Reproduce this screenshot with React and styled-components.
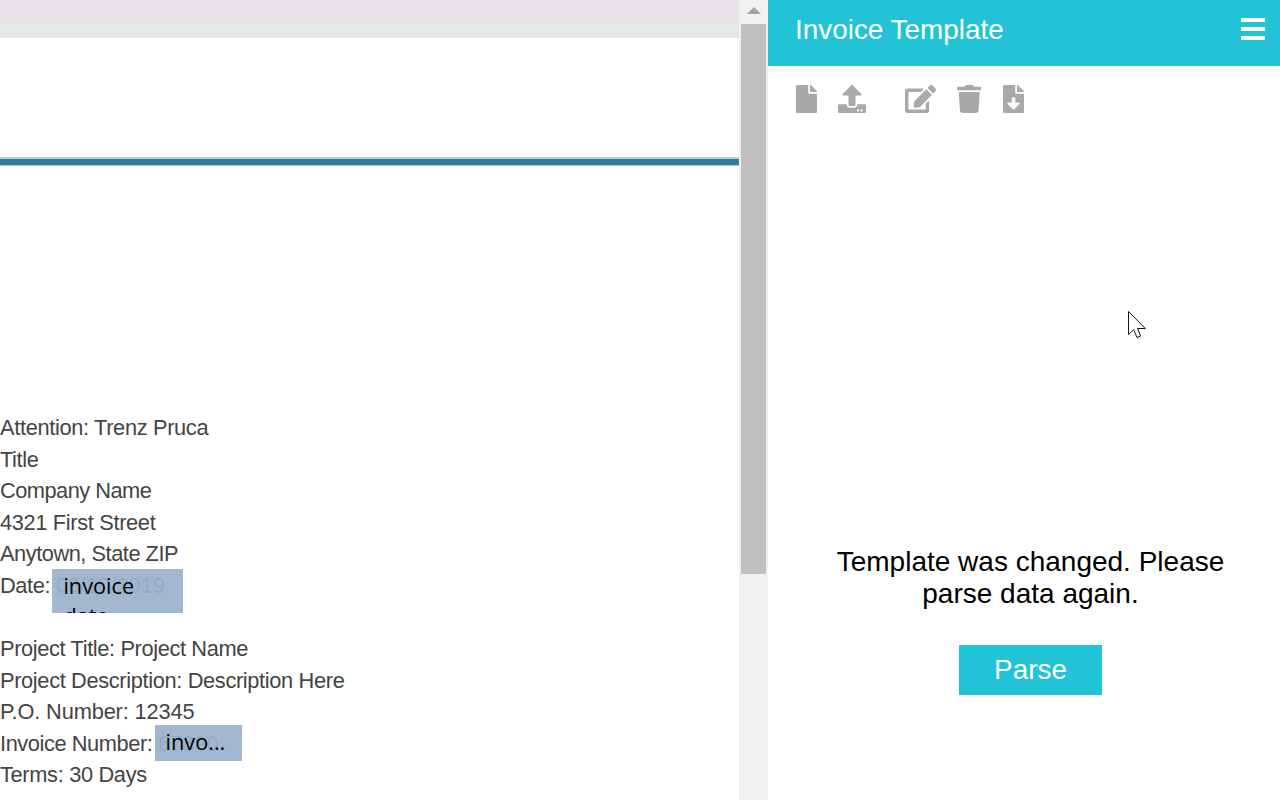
import React from "react";
import styled, { createGlobalStyle } from "styled-components";
import { FaFile, FaUpload, FaEdit, FaTrash, FaFileDownload } from "react-icons/fa";

const GlobalStyle = createGlobalStyle`
  * { box-sizing: border-box; }
  body { margin: 0; background: #fff; font-family: "Liberation Sans", Arial, sans-serif; overflow: hidden; }
`;

const Page = styled.div`
  position: relative;
  display: flex;
  width: 1280px;
  height: 800px;
  overflow: hidden;
`;

const Document = styled.main`
  width: 739px;
  height: 800px;
  overflow: hidden;
  background: #fff;
`;

const Band = styled.div`
  height: 38px;
  background: linear-gradient(#ebe2eb 0, #eae3ea 22px, #e8e8ec 27px, #e3e9e1 31px, #e3e8e1 38px);
`;

const Rule = styled.div`
  height: 9px;
  margin-top: 119px;
  background: #2f7f9f;
  border-top: 2px solid #b4d0d9;
  border-bottom: 1px solid #a5c5d5;
`;

const Details = styled.div`
  margin-top: 246.5px;
`;

const Line = styled.div`
  display: flex;
  align-items: center;
  height: 31.55px;
  color: #444;
  font-size: 21.8px;
  white-space: pre;
`;

const Text = styled.span`
  letter-spacing: ${(p) => p.$spacing}px;
`;

const Covered = styled.span`
  position: relative;
`;

const Field = styled.span`
  position: absolute;
  left: ${(p) => p.$left}px;
  top: ${(p) => p.$top}px;
  width: ${(p) => p.$width}px;
  height: ${(p) => p.$height}px;
  padding: ${(p) => p.$pad}px 10px 0 11px;
  overflow: hidden;
  background: rgba(155, 178, 203, 0.93);
  color: #000;
  font: 21.7px/30px "Open Sans", sans-serif;
  white-space: ${(p) => (p.$wrap ? "normal" : "nowrap")};
`;

const Scrollbar = styled.div`
  width: 29px;
  height: 800px;
  padding: 7px 2px 0;
  background: #f1f1f1;
`;

const Arrow = styled.div`
  width: 0;
  margin: 0 auto;
  border: 7px solid transparent;
  border-top: 0;
  border-bottom: 7px solid #a3a3a3;
`;

const Thumb = styled.div`
  width: 25px;
  height: 550px;
  margin-top: 10px;
  background: #c1c1c1;
`;

const Panel = styled.aside`
  display: flex;
  flex-direction: column;
  width: 512px;
  height: 800px;
`;

const Header = styled.header`
  display: flex;
  justify-content: space-between;
  height: 66px;
  padding: 13px 15px 0 27px;
  background: #22c3d6;
  color: #fff;
`;

const Title = styled.h1`
  margin: 1px 0 0;
  font-size: 27.9px;
  line-height: 32px;
  font-weight: 400;
`;

const Menu = styled.div`
  display: flex;
  flex-direction: column;
  gap: 5px;
  width: 24px;
  margin-top: 5px;
`;

const MenuBar = styled.i`
  height: 4px;
  background: #fff;
`;

const Toolbar = styled.nav`
  display: flex;
  height: 28px;
  margin: 19px 0 0 28px;
  color: #a9a9a9;
`;

const Tool = styled.span`
  display: block;
  width: ${(p) => p.$width}px;
  height: 28px;
  margin-right: ${(p) => p.$gap}px;
  svg { display: block; width: 100%; height: 28px; }
`;

const Notice = styled.section`
  display: flex;
  flex-direction: column;
  align-items: center;
  margin-top: 433px;
  padding-left: 13px;
`;

const Message = styled.p`
  width: 420px;
  margin: 0;
  color: #000;
  font-size: 28px;
  line-height: 32px;
  text-align: center;
`;

const Button = styled.button`
  width: 143px;
  height: 50px;
  margin-top: 35px;
  padding: 0;
  border: 0;
  background: #22c3d6;
  color: #fff;
  font: 27.9px/50px "Liberation Sans", Arial, sans-serif;
`;

const Cursor = styled.svg`
  position: absolute;
  left: 1127px;
  top: 310px;
`;

const TOOLS = [
  [FaFile, 21, 21],
  [FaUpload, 28, 39],
  [FaEdit, 31, 20.5],
  [FaTrash, 24.5, 21.5],
  [FaFileDownload, 21, 0],
];

const LINES = [
  ["Attention: Trenz Pruca", -0.34],
  ["Title", -0.4],
  ["Company Name", -0.52],
  ["4321 First Street", -0.34],
  ["Anytown, State ZIP", -0.47],
  ["Date: ", -0.38, "06/10/2019", { $left: -3.5, $top: -4, $width: 131, $height: 44, $pad: 2, $wrap: true }, "invoice date"],
  [""],
  ["Project Title: Project Name", -0.37],
  ["Project Description: Description Here", -0.35],
  ["P.O. Number: 12345", -0.15],
  ["Invoice Number: ", -0.42, "67890", { $left: -3.5, $top: -6, $width: 87, $height: 36, $pad: 2 }, "invo..."],
  ["Terms: 30 Days", -0.33],
];

export default function App() {
  return (
    <Page>
      <GlobalStyle />
      <Document>
        <Band />
        <Rule />
        <Details>
          {LINES.map(([label, spacing, value, box, field], i) => (
            <Line key={i}>
              <Text $spacing={spacing || 0}>{label}</Text>
              {value && (
                <Covered>
                  {value}
                  <Field {...box}>{field}</Field>
                </Covered>
              )}
            </Line>
          ))}
        </Details>
      </Document>
      <Scrollbar>
        <Arrow />
        <Thumb />
      </Scrollbar>
      <Panel>
        <Header>
          <Title>Invoice Template</Title>
          <Menu>
            <MenuBar />
            <MenuBar />
            <MenuBar />
          </Menu>
        </Header>
        <Toolbar>
          {TOOLS.map(([Icon, width, gap], i) => (
            <Tool key={i} $width={width} $gap={gap}>
              <Icon preserveAspectRatio="none" />
            </Tool>
          ))}
        </Toolbar>
        <Notice>
          <Message>
            Template was changed. Please
            <br />
            parse data again.
          </Message>
          <Button>Parse</Button>
        </Notice>
      </Panel>
      <Cursor width="20" height="29" viewBox="0 0 20 29">
        <path d="M1.5 1.5V24.5L6.7 19.7L10 27.5L13.6 26L10.6 18.5H18.3Z" fill="#fff" stroke="#11112b" strokeWidth="1" />
      </Cursor>
    </Page>
  );
}
